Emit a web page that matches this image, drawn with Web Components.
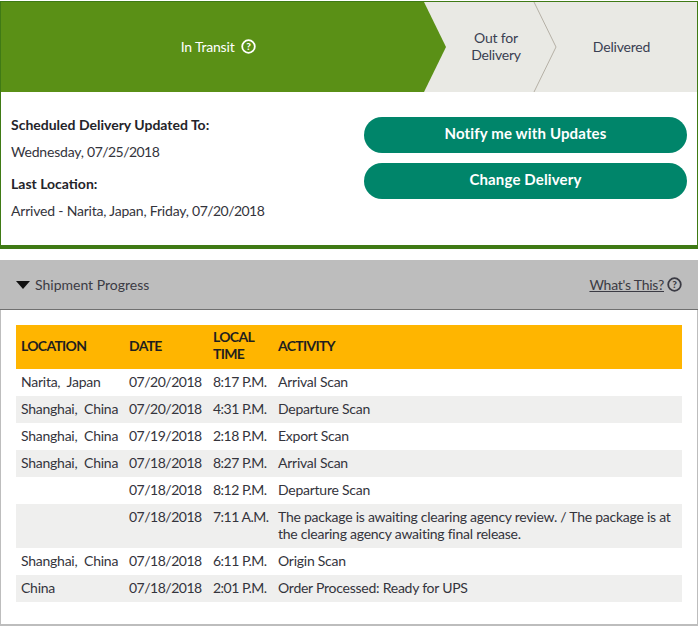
<!DOCTYPE html>
<html>
<head>
<meta charset="utf-8">
<style>
  html, body { margin: 0; background: #fff; }
  body { padding-top: 1px; font: 14px/17px Lato, "Liberation Sans", sans-serif; color: #34343c; letter-spacing: -0.2px; }
  .num { letter-spacing: -0.55px; }
</style>
</head>
<body>
<track-summary>
  <status-step slot="steps" state="current" style="width:445px;padding-right:10px">In Transit&nbsp;&nbsp;<help-icon></help-icon></status-step>
  <status-step slot="steps" state="next" style="width:110px;padding-right:10px">Out for<br>Delivery</status-step>
  <status-step slot="steps" style="flex:1;padding-right:10px">Delivered</status-step>
  <b slot="info">Scheduled Delivery Updated To:</b>
  <span slot="info">Wednesday, <span class="num">07/25/2018</span></span>
  <b slot="info">Last Location:</b>
  <span slot="info">Arrived - Narita, Japan, Friday, <span class="num">07/20/2018</span></span>
  <pill-button slot="actions">Notify me with Updates</pill-button>
  <pill-button slot="actions">Change Delivery</pill-button>
</track-summary>
<progress-panel>
  <span slot="title">Shipment Progress</span>
  <progress-table></progress-table>
</progress-panel>

<script>
class HelpIcon extends HTMLElement {
  constructor() {
    super();
    this.attachShadow({ mode: 'open' }).innerHTML = `
      <style>
        :host { display: inline-block; width: 15px; height: 15px; vertical-align: -2px; }
        svg { display: block; }
        text { font: 900 10px Lato, sans-serif; text-anchor: middle; fill: currentColor; }
      </style>
      <svg width="15" height="15" viewBox="0 0 15 15">
        <circle cx="7.5" cy="7.5" r="6.3" fill="none" stroke="currentColor" stroke-width="1.8"/>
        <text x="7.5" y="11">?</text>
      </svg>`;
  }
}
customElements.define('help-icon', HelpIcon);

class StatusStep extends HTMLElement {
  constructor() {
    super();
    var state = this.getAttribute('state');
    var chevron = state === 'next'
      ? '<svg class="line" width="24" height="90" viewBox="0 0 24 90"><path d="M1 0 L23 45 L1 90" fill="none" stroke="#b5b0a6"/></svg>'
      : '';
    this.attachShadow({ mode: 'open' }).innerHTML = `
      <style>
        :host {
          display: flex; align-items: center; justify-content: center; box-sizing: border-box;
          position: relative; height: 90px; text-align: center; color: #3a3f52; background: #e9e9e4;
          padding-bottom: 2px;
        }
        :host([state=current]) {
          color: #fff; background: #5a9016;
          clip-path: polygon(0 0, 423px 0, 445px 45px, 423px 90px, 0 90px);
        }
        .line { position: absolute; right: -1px; top: 0; z-index: 1; }
      </style>
      <div><slot></slot></div>${chevron}`;
  }
}
customElements.define('status-step', StatusStep);

class PillButton extends HTMLElement {
  constructor() {
    super();
    this.attachShadow({ mode: 'open' }).innerHTML = `
      <style>
        :host {
          display: flex; align-items: center; justify-content: center; height: 36px; border-radius: 18px;
          background: #00856a; color: #fff; font-weight: 700; font-size: 15px; letter-spacing: 0.15px;
          padding-bottom: 4px; box-sizing: border-box;
        }
      </style>
      <slot></slot>`;
  }
}
customElements.define('pill-button', PillButton);

class TrackSummary extends HTMLElement {
  constructor() {
    super();
    this.attachShadow({ mode: 'open' }).innerHTML = `
      <style>
        :host {
          display: block; width: 698px; box-sizing: border-box; height: 248px;
          border: 1px solid #3f7a15; border-bottom-width: 4px;
        }
        .steps { display: flex; background: #e9e9e4; }
        .body { display: flex; justify-content: space-between; padding: 24px 10px 0 10px; }
        .info { display: grid; width: 340px; align-content: start; }
        .info ::slotted(*) { display: block; margin-bottom: 15px; }
        .info ::slotted(b) { font-weight: 700; color: #24242a; margin-bottom: 10px; letter-spacing: 0; }
        .actions { display: grid; width: 323px; gap: 10px; align-content: start; margin-top: 1px; }
      </style>
      <div class="steps"><slot name="steps"></slot></div>
      <div class="body">
        <div class="info"><slot name="info"></slot></div>
        <div class="actions"><slot name="actions"></slot></div>
      </div>`;
  }
}
customElements.define('track-summary', TrackSummary);

class ProgressPanel extends HTMLElement {
  constructor() {
    super();
    this.attachShadow({ mode: 'open' }).innerHTML = `
      <style>
        :host {
          display: block; width: 698px; box-sizing: border-box; margin-top: 11px;
          border: 1px solid #bdbdbd; border-top: 0; border-bottom-width: 2px;
        }
        header {
          display: flex; align-items: center; justify-content: space-between; height: 49px; margin: 0 -1px;
          background: #bdbdbd; border-bottom: 1px solid #707070; padding: 0 16px; color: #3b3b44;
        }
        .title { display: flex; align-items: center; gap: 5px; letter-spacing: 0; }
        .arrow { width: 0; height: 0; border: 7px solid transparent; border-top: 8px solid #111; border-bottom: 0; }
        .help { display: flex; align-items: center; gap: 3px; }
        a { color: inherit; text-decoration: underline; letter-spacing: -0.25px; }
        .content { padding: 15px 15px 22px 15px; }
      </style>
      <header>
        <div class="title"><span class="arrow"></span><slot name="title"></slot></div>
        <div class="help"><a>What's This?</a><help-icon></help-icon></div>
      </header>
      <div class="content"><slot></slot></div>`;
  }
}
customElements.define('progress-panel', ProgressPanel);

class ProgressTable extends HTMLElement {
  constructor() {
    super();
    var rows = [
      ['Narita,&nbsp; Japan', '07/20/2018', '8:17 P.M.', 'Arrival Scan'],
      ['Shanghai,&nbsp; China', '07/20/2018', '4:31 P.M.', 'Departure Scan'],
      ['Shanghai,&nbsp; China', '07/19/2018', '2:18 P.M.', 'Export Scan'],
      ['Shanghai,&nbsp; China', '07/18/2018', '8:27 P.M.', 'Arrival Scan'],
      ['', '07/18/2018', '8:12 P.M.', 'Departure Scan'],
      ['', '07/18/2018', '7:11 A.M.', 'The package is awaiting clearing agency review. / The package is at the clearing agency awaiting final release.'],
      ['Shanghai,&nbsp; China', '07/18/2018', '6:11 P.M.', 'Origin Scan'],
      ['China', '07/18/2018', '2:01 P.M.', 'Order Processed: Ready for UPS']
    ];
    var body = rows.map(function (r) {
      return '<tr><td class="nw">' + r[0] + '</td><td class="num">' + r[1] + '</td><td class="num">' + r[2] + '</td><td>' + r[3] + '</td></tr>';
    }).join('');
    this.attachShadow({ mode: 'open' }).innerHTML = `
      <style>
        :host { display: block; }
        table { width: 666px; border-collapse: collapse; table-layout: fixed; }
        th { background: #ffb500; color: #1f1f1f; text-align: left; font-weight: 700; padding: 3px 5px 7px; vertical-align: middle; letter-spacing: -0.7px; }
        td { padding: 4px 5px 6px; vertical-align: top; }
        td:last-child { letter-spacing: -0.25px; }
        .nw, .num { white-space: nowrap; }
        .nw { letter-spacing: -0.25px; }
        .num { letter-spacing: -0.5px; }
        tbody tr:nth-child(even) td { background: #efefee; }
      </style>
      <table>
        <colgroup><col style="width:108px"><col style="width:84px"><col style="width:65px"><col></colgroup>
        <thead><tr><th>LOCATION</th><th>DATE</th><th>LOCAL TIME</th><th>ACTIVITY</th></tr></thead>
        <tbody>${body}</tbody>
      </table>`;
  }
}
customElements.define('progress-table', ProgressTable);
</script>
</body>
</html>
